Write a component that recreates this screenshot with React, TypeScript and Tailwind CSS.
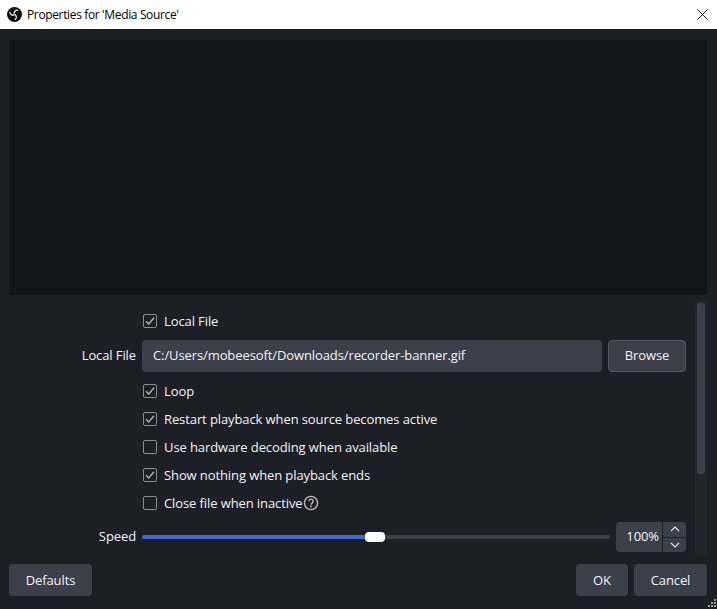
const font = { fontFamily: '"Open Sans", "Noto Sans", sans-serif' };

function Check({ checked, label, extra }: { checked?: boolean; label: string; extra?: React.ReactNode }) {
  return (
    <div className="flex h-[28px] items-center pl-[143px]">
      <div className="flex h-[14px] w-[14px] items-center justify-center rounded-[2px] border border-[#8a8c92]">
        {checked && (
          <svg width="12" height="12" viewBox="0 0 12 12" fill="none" stroke="#b4b5b9" strokeWidth="1.4">
            <path d="M2 6.2 L4.8 9 L10 2.8" />
          </svg>
        )}
      </div>
      <span className="ml-[7px] text-[13px] leading-[18px] tracking-[-0.1px] text-[#f2f3f5]">{label}</span>
      {extra}
    </div>
  );
}

function Logo() {
  return (
    <svg width="15" height="15" viewBox="0 0 16 16" fill="none">
      <circle cx="8" cy="8" r="8" fill="#111113" />
      <g stroke="#f4f4f4" strokeWidth="1.3" strokeLinecap="round">
        <path d="M7.6 7.4C7.4 5.2 9 3.2 11.4 3.4" />
        <path d="M7.5 8.4C5.6 9 3.4 8 3 5.6" />
        <path d="M8.7 8.2C10.3 9.6 10.5 11.9 8.8 13.3" />
      </g>
    </svg>
  );
}

export default function App() {
  return (
    <div className="relative flex h-[609px] w-[717px] flex-col overflow-hidden bg-[#1d1f26]" style={font}>
      <div className="flex h-[29px] shrink-0 items-center bg-white pl-[7px] pr-[9px]">
        <Logo />
        <span className="ml-[5px] text-[12px] tracking-[-0.36px] text-[#000000]">Properties for 'Media Source'</span>
        <svg className="ml-auto" width="11" height="11" viewBox="0 0 11 11" stroke="#111" strokeWidth="1" fill="none">
          <path d="M0.5 0.5 L10.5 10.5 M10.5 0.5 L0.5 10.5" />
        </svg>
      </div>

      <div className="flex min-h-0 flex-1 flex-col pb-[13px] pl-[9px] pr-[10px] pt-[11px]">
        <div className="h-[255px] w-[698px] shrink-0 bg-[#14151a]" />

        <div className="flex h-[261px] shrink-0">
          <div className="-ml-[9px] w-[695px] shrink-0 pt-[12px]">
            <Check checked label="Local File" />
            <div className="mb-[5px] mt-[5px] flex h-[32px] items-center">
              <span className="w-[136px] text-right text-[13px] tracking-[-0.1px] text-[#f2f3f5]">Local File</span>
              <div className="ml-[6px] flex h-[32px] w-[460px] items-center rounded-[4px] bg-[#3c404b] pl-[11px] text-[13px] tracking-[-0.1px] text-[#f2f3f5]">
                C:/Users/mobeesoft/Downloads/recorder-banner.gif
              </div>
              <button className="ml-[6px] flex h-[32px] w-[78px] items-center justify-center rounded-[4px] border border-[#545866] bg-[#3c404b] text-[13px] tracking-[-0.1px] text-[#f2f3f5]">
                Browse
              </button>
            </div>
            <Check checked label="Loop" />
            <Check checked label="Restart playback when source becomes active" />
            <Check label="Use hardware decoding when available" />
            <Check checked label="Show nothing when playback ends" />
            <Check
              label="Close file when inactive"
              extra={
                <svg width="16" height="16" viewBox="0 0 16 16" fill="none">
                  <circle cx="8" cy="8" r="6.6" stroke="#b9babd" strokeWidth="1.4" />
                  <path d="M5.9 6.3a2.1 2.1 0 1 1 3.2 1.8c-.7.4-1.1.8-1.1 1.6" stroke="#b9babd" strokeWidth="1.4" />
                  <circle cx="8" cy="11.5" r="0.9" fill="#b9babd" />
                </svg>
              }
            />
            <div className="mt-[5px] flex h-[30px] items-center">
              <span className="w-[136px] text-right text-[13px] tracking-[-0.1px] text-[#f2f3f5]">Speed</span>
              <div className="relative ml-[6px] h-[4px] w-[468px] rounded-full bg-[#3c404b]">
                <div className="h-[4px] w-[225px] rounded-full bg-[#4169d0]" />
                <div className="absolute left-[223px] top-[-3px] h-[10px] w-[20px] rounded-[4px] bg-white" />
              </div>
              <div className="ml-[6px] flex h-[30px] w-[70px] rounded-[4px] bg-[#3c404b]">
                <div className="flex w-[46px] items-center justify-end pr-[3px] text-[13px] tracking-[-0.1px] text-[#f2f3f5]">100%</div>
                <div className="flex w-[24px] flex-col border-l border-[#1d1f26]">
                  <div className="flex flex-1 items-center justify-center border-b border-[#1d1f26]">
                    <svg width="10" height="6" viewBox="0 0 10 6" fill="none" stroke="#e8e9eb" strokeWidth="1.1"><path d="M1 5 L5 1 L9 5" /></svg>
                  </div>
                  <div className="flex flex-1 items-center justify-center">
                    <svg width="10" height="6" viewBox="0 0 10 6" fill="none" stroke="#e8e9eb" strokeWidth="1.1"><path d="M1 1 L5 5 L9 1" /></svg>
                  </div>
                </div>
              </div>
            </div>
          </div>
          <div className="mt-[6px] h-[255px] w-[12px] shrink-0 rounded-[4px] bg-[#23252d] p-[2px]">
            <div className="h-[171px] w-[8px] rounded-[3px] bg-[#3c404b]" />
          </div>
        </div>

        <div className="mt-[8px] flex h-[32px] shrink-0">
          <button className="flex w-[83px] items-center justify-center rounded-[4px] bg-[#3c404b] pt-px text-[13px] tracking-[-0.1px] text-[#f2f3f5]">Defaults</button>
          <button className="ml-auto flex w-[52px] items-center justify-center rounded-[4px] bg-[#3c404b] pt-px text-[13px] tracking-[-0.1px] text-[#f2f3f5]">OK</button>
          <button className="ml-[6px] flex w-[73px] items-center justify-center rounded-[4px] bg-[#3c404b] pt-px text-[13px] tracking-[-0.1px] text-[#f2f3f5]">Cancel</button>
        </div>
      </div>
      <svg className="absolute left-[706px] top-[598px]" width="11" height="11" viewBox="0 0 11 11" fill="#9a9ca3">
        <rect x="8" y="1" width="2" height="2" />
        <rect x="5" y="4" width="2" height="2" />
        <rect x="8" y="4" width="2" height="2" />
        <rect x="2" y="7" width="2" height="2" />
        <rect x="5" y="7" width="2" height="2" />
        <rect x="8" y="7" width="2" height="2" />
      </svg>
    </div>
  );
}
